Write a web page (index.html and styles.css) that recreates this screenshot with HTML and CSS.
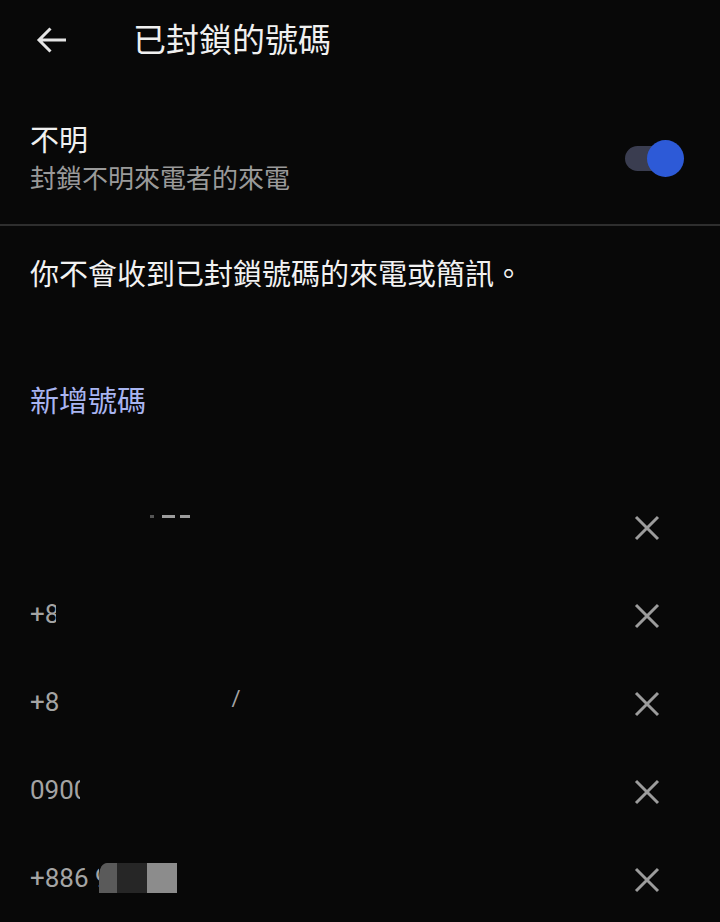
FILE: index.html
```html
<!DOCTYPE html>
<html lang="zh-Hant">

<head>
    <meta charset="UTF-8">
    <meta name="viewport" content="width=device-width, initial-scale=1.0">
    <title>已封鎖的號碼</title>
    <link rel="stylesheet" href="styles.css">
</head>

<body>
    <header class="topbar">
        <svg class="back" width="32" height="30" viewBox="0 0 32 30">
            <path d="M30 14H3M14.5 2.5L3 14l11.5 11.5" fill="none" stroke="#e4e4e4" stroke-width="3"/>
        </svg>
        <h1 class="title">已封鎖的號碼</h1>
    </header>

    <main>
        <section class="pref">
            <div class="pref-text">
                <div class="pref-title">不明</div>
                <div class="pref-summary">封鎖不明來電者的來電</div>
            </div>
            <div class="switch">
                <span class="track"></span>
                <span class="thumb"></span>
            </div>
        </section>

        <p class="note">你不會收到已封鎖號碼的來電或簡訊。</p>

        <div class="add">新增號碼</div>

        <ul class="numbers">
            <li class="row">
                <span class="num"><span class="dash d1"></span><span class="dash d2"></span><span class="dash d3"></span></span>
                <svg class="remove" width="26" height="26" viewBox="0 0 26 26"><path d="M2 2l22 22M24 2L2 24" stroke="#9c9c9c" stroke-width="3"/></svg>
            </li>
            <li class="row">
                <span class="num">+<span class="cut c8">8</span></span>
                <svg class="remove" width="26" height="26" viewBox="0 0 26 26"><path d="M2 2l22 22M24 2L2 24" stroke="#9c9c9c" stroke-width="3"/></svg>
            </li>
            <li class="row">
                <span class="num">+8<span class="slash">/</span></span>
                <svg class="remove" width="26" height="26" viewBox="0 0 26 26"><path d="M2 2l22 22M24 2L2 24" stroke="#9c9c9c" stroke-width="3"/></svg>
            </li>
            <li class="row">
                <span class="num">090<span class="cut c0">0</span></span>
                <svg class="remove" width="26" height="26" viewBox="0 0 26 26"><path d="M2 2l22 22M24 2L2 24" stroke="#9c9c9c" stroke-width="3"/></svg>
            </li>
            <li class="row">
                <span class="num">+886 <span class="cut c9">9</span><span class="mask m1"></span><span class="mask m2"></span><span class="mask m3"></span></span>
                <svg class="remove" width="26" height="26" viewBox="0 0 26 26"><path d="M2 2l22 22M24 2L2 24" stroke="#9c9c9c" stroke-width="3"/></svg>
            </li>
        </ul>
    </main>
</body>

</html>
```

FILE: styles.css
```css
body {
    margin: 0;
    background: #080808;
    color: #f2f2f2;
    font-family: Roboto, "Noto Sans CJK TC", sans-serif;
    width: 720px;
    height: 922px;
    overflow: hidden;
}

.topbar {
    height: 82px;
    display: flex;
    align-items: center;
    padding-left: 36px;
}

.back {
    display: block;
    margin-top: -1px;
}

.title {
    margin: 0 0 0 65px;
    font-size: 33px;
    font-weight: 400;
    line-height: 40px;
    color: #f0f0f0;
}

.pref {
    display: flex;
    align-items: center;
    justify-content: space-between;
    padding: 40px 36px 26px 30px;
    border-bottom: 2px solid #2e2e2e;
}

.pref-title {
    font-size: 29px;
    line-height: 38px;
    color: #f0f0f0;
}

.pref-summary {
    font-size: 26px;
    line-height: 38px;
    color: #9a9a9a;
}

.switch {
    display: flex;
    align-items: center;
    margin-top: -3px;
}

.track {
    width: 44px;
    height: 25px;
    border-radius: 13px;
    background: #3a3d50;
}

.thumb {
    width: 37px;
    height: 37px;
    border-radius: 50%;
    background: #2d5ad7;
    margin-left: -22px;
}

.note {
    margin: 29px 0 0;
    padding-left: 30px;
    font-size: 29px;
    line-height: 40px;
    color: #f2f2f2;
}

.add {
    margin-top: 87px;
    padding-left: 30px;
    font-size: 29px;
    line-height: 40px;
    color: #a9b5f1;
}

.numbers {
    list-style: none;
    margin: 62px 0 0;
    padding: 0;
}

.row {
    height: 88px;
    display: flex;
    align-items: center;
    justify-content: space-between;
    padding: 0 60px 0 30px;
}

.num {
    display: flex;
    align-items: center;
    font-size: 26px;
    line-height: 34px;
    height: 34px;
    color: #a4a4a4;
    white-space: pre;
    margin-top: -4px;
}

.remove {
    display: block;
}

.dash {
    height: 3px;
    background: #9c9c9c;
    margin-bottom: 20px;
}

.d1 {
    width: 4px;
    margin-left: 120px;
    background: #555;
}

.d2 {
    width: 13px;
    margin-left: 8px;
}

.d3 {
    width: 10px;
    margin-left: 5px;
}

.cut {
    display: inline-block;
    overflow: hidden;
}

.c8 {
    width: 11px;
}

.c0 {
    width: 6px;
}

.c9 {
    width: 4px;
}

.slash {
    margin-left: 172px;
    font-size: 22px;
    margin-bottom: 6px;
}

.mask {
    display: inline-block;
    height: 30px;
}

.m1 {
    width: 18px;
    background: #5a5a5a;
    border-top-left-radius: 8px 12px;
}

.m2 {
    width: 30px;
    background: #262626;
}

.m3 {
    width: 30px;
    background: #8c8c8c;
}
```
